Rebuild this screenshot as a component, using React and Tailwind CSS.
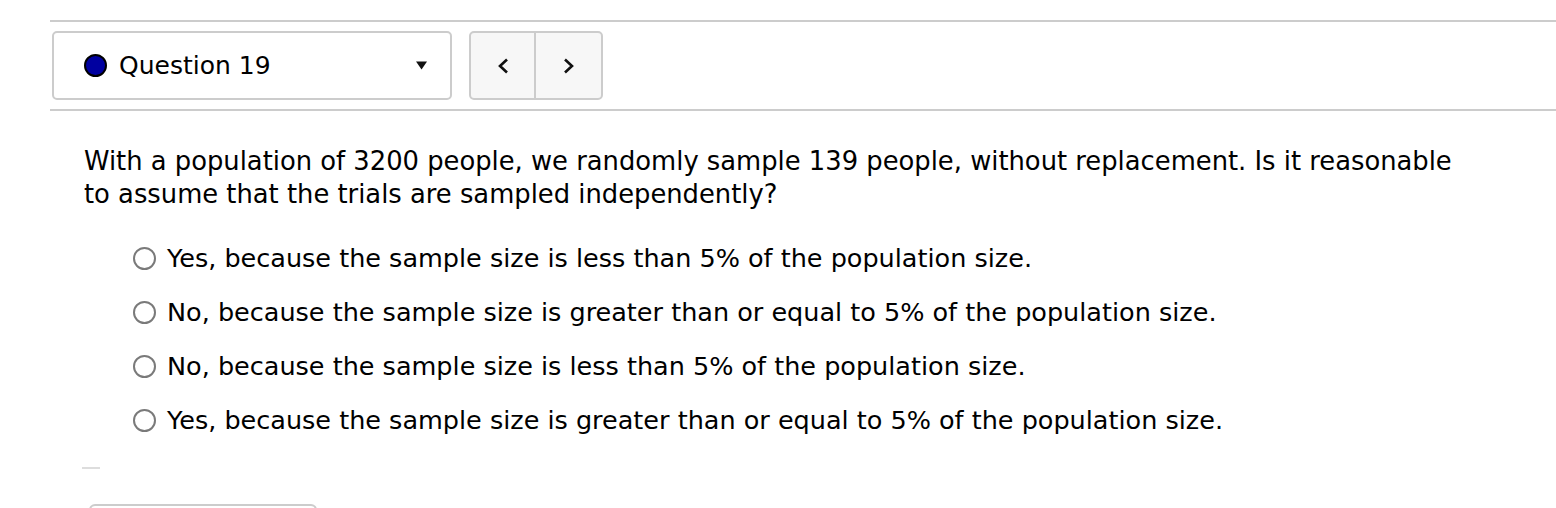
const options = [
  'Yes, because the sample size is less than 5% of the population size.',
  'No, because the sample size is greater than or equal to 5% of the population size.',
  'No, because the sample size is less than 5% of the population size.',
  'Yes, because the sample size is greater than or equal to 5% of the population size.'
]

const App = () => {
  return (
    <div className="w-[1556px] h-[508px] overflow-hidden bg-white text-black font-['DejaVu_Sans',sans-serif]">
      <div className="pl-[50px] pt-[20px]">
        <div className="h-[2px] bg-[#cccccc]" />

        {/* Question picker */}
        <div className="flex items-center gap-[17px] pl-[2px] pt-[9px] pb-[9px]">
          <div className="flex items-center w-[400px] h-[69px] border-2 border-[#cccccc] rounded-[5px] pl-[30px] pr-[23px]">
            <span className="w-[23px] h-[23px] rounded-full bg-[#0000a0] border-2 border-black" />
            <span className="ml-[12px] text-[25px] flex-1">Question 19</span>
            <svg width="11" height="9" viewBox="0 0 11 9">
              <path d="M0 0.5h11L5.5 8.5z" fill="#111" />
            </svg>
          </div>
          <div className="flex h-[69px] border-2 border-[#cccccc] rounded-[5px] bg-[#f7f7f7] overflow-hidden">
            <button className="w-[65px] flex items-center justify-center border-r-2 border-[#cccccc]">
              <svg width="12" height="16" viewBox="0 0 12 16">
                <path d="M10 1.5L3 8l7 6.5" fill="none" stroke="#111" strokeWidth="2.6" />
              </svg>
            </button>
            <button className="w-[65px] flex items-center justify-center">
              <svg width="12" height="16" viewBox="0 0 12 16">
                <path d="M2 1.5L9 8l-7 6.5" fill="none" stroke="#111" strokeWidth="2.6" />
              </svg>
            </button>
          </div>
        </div>

        <div className="h-[2px] bg-[#cccccc]" />
      </div>

      {/* Question body */}
      <div className="pl-[84px] pt-[34px]">
        <p className="text-[25.8px] leading-[33px] w-[1390px]">
          With a population of 3200 people, we randomly sample 139 people, without replacement. Is it reasonable to assume that the trials are sampled independently?
        </p>
        <div className="pl-[49px] pt-[31px] flex flex-col gap-[22px]">
          {options.map((opt) => (
            <label key={opt} className="flex items-center h-[32px] text-[25.5px]">
              <span className="w-[23px] h-[23px] shrink-0 rounded-full border-2 border-[#7a7a7a] bg-white" />
              <span className="ml-[11px]">{opt}</span>
            </label>
          ))}
        </div>
        <div className="w-[18px] h-[2px] bg-[#dddddd] mt-[31px] ml-[-2px]" />
        <div className="w-[228px] h-[20px] border-2 border-[#cccccc] rounded-[6px] mt-[35px] ml-[5px]" />
      </div>
    </div>
  )
}

export default App
